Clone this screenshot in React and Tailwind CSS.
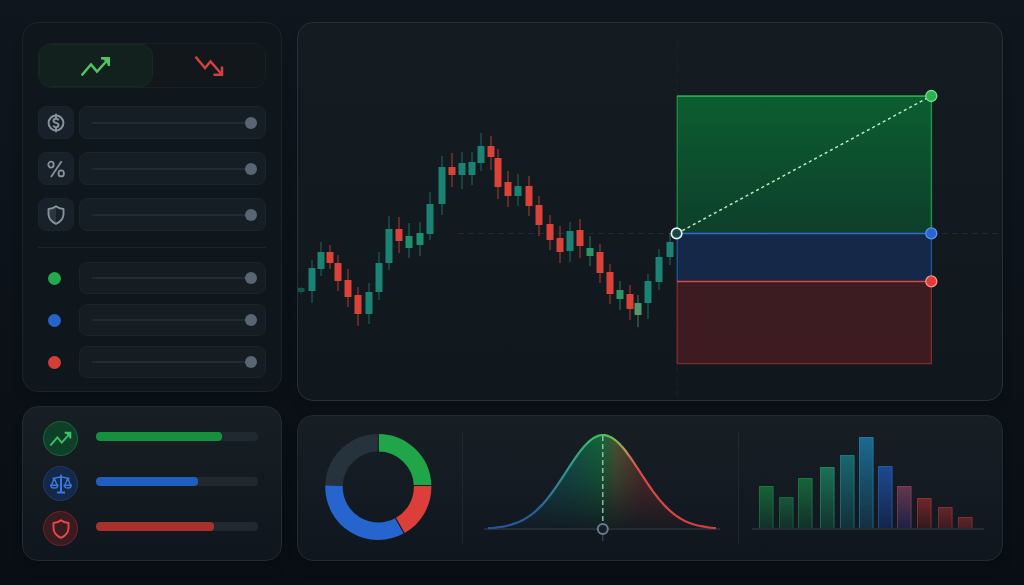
import React, { useState } from 'react';

// x, body top, body bottom, wick top, wick bottom, colour
const CANDLES = [
  [3, 265, 269, 264, 271, '#14564d'],
  [14, 245, 268, 237, 280, '#1b8373'],
  [23, 229, 246, 219, 253, '#1b8373'],
  [32, 229, 240, 222, 246, '#dc4338'],
  [40, 240, 258, 232, 268, '#dc4338'],
  [50, 257, 274, 246, 284, '#dc4338'],
  [60, 272, 291, 264, 303, '#dc4338'],
  [71, 269, 291, 260, 301, '#1b8373'],
  [81, 240, 269, 229, 277, '#1b8373'],
  [91, 206, 240, 193, 247, '#1b8373'],
  [101, 206, 218, 194, 230, '#dc4338'],
  [111, 213, 225, 200, 235, '#1f8f70'],
  [122, 210, 222, 199, 233, '#1f8f70'],
  [132, 181, 211, 169, 217, '#1b8373'],
  [144, 144, 181, 133, 192, '#1b8373'],
  [154, 144, 152, 130, 164, '#dc4338'],
  [164, 140, 152, 129, 166, '#1b8373'],
  [174, 139, 152, 129, 162, '#1b8373'],
  [183, 123, 140, 110, 148, '#1b8373'],
  [193, 123, 134, 113, 147, '#dc4338'],
  [200, 135, 164, 126, 176, '#dc4338'],
  [210, 159, 173, 148, 184, '#dc4338'],
  [220, 163, 173, 151, 183, '#1b8373'],
  [231, 163, 183, 153, 193, '#dc4338'],
  [241, 182, 202, 173, 213, '#dc4338'],
  [252, 201, 217, 192, 227, '#dc4338'],
  [262, 215, 229, 203, 240, '#dc4338'],
  [272, 208, 228, 199, 239, '#1b8373'],
  [282, 207, 223, 196, 235, '#dc4338'],
  [292, 225, 233, 213, 243, '#2c9566'],
  [302, 229, 250, 221, 260, '#dc4338'],
  [312, 249, 271, 241, 281, '#dc4338'],
  [322, 267, 276, 258, 287, '#2c9566'],
  [332, 271, 286, 262, 297, '#dc4338'],
  [340, 280, 292, 272, 304, '#57966b'],
  [350, 258, 280, 251, 296, '#1b8373'],
  [361, 234, 259, 226, 267, '#1b8373'],
  [372, 219, 234, 210, 242, '#1b8373'],
];

// x, top, fill top, fill bottom, edge
const BARS = [
  [20, 54, '#176437', '#12302a', '#1f7f43'],
  [40, 65, '#185838', '#12302a', '#1f6a43'],
  [59, 46, '#176539', '#12302a', '#1f8046'],
  [81, 35, '#1b7158', '#12332f', '#24896a'],
  [101, 23, '#1b6770', '#123039', '#257f84'],
  [120, 5, '#1d6a90', '#13303f', '#2380ab'],
  [139, 34, '#1e4a8f', '#14254a', '#285fb8'],
  [158, 54, '#66364f', '#1b2244', '#8d3f5a'],
  [178, 66, '#6e272b', '#33191e', '#a63736'],
  [199, 75, '#64262a', '#3b1b20', '#9a3535'],
  [219, 85, '#5e2529', '#461d22', '#9a3535'],
];

const bellPoints = Array.from({ length: 77 }, (_, i) => {
  const x = 25 + i * 3;
  const y = 97 - 94 * Math.exp(-((x - 140) ** 2) / (2 * 37 ** 2));
  return `${x},${y.toFixed(1)}`;
});
const bellPath = `M${bellPoints.join(' L')}`;

const TrendUpIcon = ({ className }) => (
  <svg viewBox="0 0 30 20" className={className} fill="none" stroke="currentColor" strokeWidth="2.5">
    <path d="M0.5 19.5 10 8.5 16 15.5 27 3.5" />
    <path d="M20 2.2H27.8V10" />
    <path d="M21 2H28V9.5Z" fill="currentColor" stroke="none" />
  </svg>
);

const TrendDownIcon = ({ className }) => (
  <svg viewBox="0 0 30 20" className={className} fill="none" stroke="currentColor" strokeWidth="2.5">
    <path d="M1.5 .7 11 12 16.5 5.5 27.5 18" />
    <path d="M28 10.5V18.7H19.5" />
  </svg>
);

const DollarIcon = () => (
  <svg viewBox="0 0 20 20" className="w-5 h-5" fill="none" stroke="currentColor" strokeWidth="2">
    <circle cx="10" cy="10" r="7.4" />
    <path d="M10 .8V5.6M10 14.4V19.2" />
    <path d="M12.6 7.4C12.2 6.3 11.2 5.8 10 5.8 8.5 5.8 7.5 6.6 7.5 7.8 7.5 10.6 12.6 9.2 12.6 12.1 12.6 13.4 11.5 14.2 10 14.2 8.6 14.2 7.6 13.6 7.3 12.5" />
  </svg>
);

const PercentIcon = () => (
  <svg viewBox="0 0 20 20" className="w-5 h-5" fill="none" stroke="currentColor" strokeWidth="1.8">
    <path d="M15.6 2.2 5 18" />
    <ellipse cx="5" cy="5.6" rx="2.7" ry="3" />
    <ellipse cx="15.2" cy="14.4" rx="2.7" ry="3" />
  </svg>
);

const ShieldIcon = ({ className, shaded }) => (
  <svg viewBox="0 0 20 20" className={className} fill="none" stroke="currentColor" strokeWidth="1.9" strokeLinejoin="round">
    {shaded && <path d="M10 1.5V18.5C5.5 16.5 2.5 13.3 2.5 9V4.2C5.6 4 8 3.2 10 1.5Z" fill="#2c363f" stroke="none" />}
    <path d="M10 1.3C12 3 14.4 3.9 17.5 4V9C17.5 13.4 14.5 16.8 10 18.8 5.5 16.8 2.5 13.4 2.5 9V4C5.6 3.9 8 3 10 1.3Z" />
  </svg>
);

const ScaleIcon = ({ className }) => (
  <svg viewBox="0 0 22 20" className={className} fill="none" stroke="currentColor">
    <path d="M11 .8V18.5" strokeWidth="2" />
    <path d="M7 18.5H15" strokeWidth="2" />
    <path d="M2.5 4.3C5 4.6 7.5 3 11 3S17 4.6 19.5 4.3" strokeWidth="1.7" />
    <path d="M4.3 4.5 1.3 11.5M4.3 4.5 7.3 11.5M17.7 4.5 14.7 11.5M17.7 4.5 20.7 11.5" strokeWidth="1.4" />
    <path d="M.8 11.3H7.8C7.8 15 .8 15 .8 11.3ZM14.2 11.3H21.2C21.2 15 14.2 15 14.2 11.3Z" strokeWidth="1.5" />
  </svg>
);

const Slider = ({ id, label }) => {
  const [value, setValue] = useState(100);
  return (
    <input
      id={id}
      type="range"
      aria-label={label}
      value={value}
      onChange={(e) => setValue(Number(e.target.value))}
      className="w-full h-3 appearance-none bg-transparent cursor-pointer
        [&::-webkit-slider-runnable-track]:h-[2px] [&::-webkit-slider-runnable-track]:rounded-full [&::-webkit-slider-runnable-track]:bg-[#212b32]
        [&::-webkit-slider-thumb]:appearance-none [&::-webkit-slider-thumb]:w-3 [&::-webkit-slider-thumb]:h-3 [&::-webkit-slider-thumb]:-mt-[5px]
        [&::-webkit-slider-thumb]:rounded-full [&::-webkit-slider-thumb]:bg-[#596572]"
    />
  );
};

const SETTINGS = [
  { id: 'amount', label: 'Amount', icon: <DollarIcon /> },
  { id: 'percent', label: 'Risk percent', icon: <PercentIcon /> },
  { id: 'protection', label: 'Protection', icon: <ShieldIcon className="w-5 h-5" shaded /> },
];

const LEVELS = [
  { id: 'target', label: 'Target', dot: 'bg-[#22a94b]' },
  { id: 'entry', label: 'Entry', dot: 'bg-[#2664cb]' },
  { id: 'stop', label: 'Stop', dot: 'bg-[#d63d37]' },
];

const METERS = [
  {
    label: 'Profit',
    value: 78,
    bar: 'bg-[#16903f]',
    badge: 'bg-[#0e3f29] border-[#18693a] text-[#3cc463]',
    icon: <TrendUpIcon className="w-[22px] h-[15px]" />,
  },
  {
    label: 'Balance',
    value: 63,
    bar: 'bg-[#205fc0]',
    badge: 'bg-[#142949] border-[#1d3a6c] text-[#3b78dc]',
    icon: <ScaleIcon className="w-[22px] h-5" />,
  },
  {
    label: 'Risk',
    value: 73,
    bar: 'bg-[#a8302d]',
    badge: 'bg-[#3b1b20] border-[#6b2529] text-[#e64c46]',
    icon: <ShieldIcon className="w-5 h-5" />,
  },
];

const OrderPanel = () => {
  const [side, setSide] = useState('long');

  return (
    <section className="rounded-2xl border border-[#1c2429] bg-[#0f161c] px-[15px] pt-5 pb-[13px] shadow-lg">
      <div className="flex h-[45px] rounded-xl border border-[#192125] bg-[#11171b] overflow-hidden mb-[18px]">
        <button
          aria-label="Long"
          onClick={() => setSide('long')}
          className={`flex-1 flex items-center justify-center rounded-xl text-[#4fc167] ${side === 'long' ? 'bg-[#12201e] border border-[#142b22]' : ''}`}
        >
          <TrendUpIcon className="w-[30px] h-5" />
        </button>
        <button
          aria-label="Short"
          onClick={() => setSide('short')}
          className={`flex-1 flex items-center justify-center rounded-xl text-[#cf423f] ${side === 'short' ? 'bg-[#241619] border border-[#351a1d]' : ''}`}
        >
          <TrendDownIcon className="w-[30px] h-5" />
        </button>
      </div>

      <div className="flex flex-col gap-[13px]">
        {SETTINGS.map(({ id, label, icon }) => (
          <div key={id} className="flex gap-[5px] h-[33px]">
            <label htmlFor={id} className="w-9 flex items-center justify-center rounded-lg border border-[#1a242b] bg-[#182129] text-[#87929c]">
              {icon}
            </label>
            <div className="flex-1 flex items-center rounded-lg border border-[#1b252b] bg-[#151e25] pl-3 pr-2">
              <Slider id={id} label={label} />
            </div>
          </div>
        ))}
      </div>

      <hr className="border-[#1c2428] mt-4 mb-[14px]" />

      <div className="flex flex-col gap-[10px]">
        {LEVELS.map(({ id, label, dot }) => (
          <div key={id} className="flex items-center gap-[5px] h-8">
            <label htmlFor={id} className="w-9 flex pl-[10px]">
              <span className={`w-[13px] h-[13px] rounded-full ${dot}`} />
            </label>
            <div className="flex-1 h-full flex items-center rounded-lg border border-[#1a2429] bg-[#151d23] pl-3 pr-2">
              <Slider id={id} label={label} />
            </div>
          </div>
        ))}
      </div>
    </section>
  );
};

const MeterPanel = () => (
  <section className="flex flex-col gap-[10px] rounded-2xl border border-[#222a2f] bg-linear-to-b from-[#171f24] to-[#0f161d] pl-5 pr-[23px] py-[14px] shadow-lg">
    {METERS.map(({ label, value, bar, badge, icon }) => (
      <div key={label} className="flex items-center gap-[18px]">
        <div className={`w-[35px] h-[35px] shrink-0 flex items-center justify-center rounded-full border ${badge}`}>{icon}</div>
        <div
          role="progressbar"
          aria-label={label}
          aria-valuenow={value}
          className="flex-1 h-[9px] mb-1 rounded-[4px] bg-[#20292f] overflow-hidden"
        >
          <div className={`h-full rounded-[4px] ${bar}`} style={{ width: `${value}%` }} />
        </div>
      </div>
    ))}
  </section>
);

const PriceChart = () => (
  <section className="rounded-2xl border border-[#263035] bg-linear-to-b from-[#141b21] to-[#10171d] overflow-hidden shadow-lg">
    <svg viewBox="0 0 704 377" className="block w-full">
      <defs>
        <linearGradient id="profitZone" x1="0" y1="0" x2="0" y2="1">
          <stop offset="0" stopColor="#0c5e30" />
          <stop offset="1" stopColor="#0d3f2b" />
        </linearGradient>
      </defs>

      <path d="M379 18V73M379 342V376" stroke="#1b2329" strokeDasharray="8 4" />
      <path d="M160 210.5H379M634 210.5H703" stroke="#222b31" strokeDasharray="6 4" />

      {CANDLES.map(([x, top, bottom, high, low, color]) => (
        <g key={x} fill={color}>
          <rect x={x - 0.5} y={high} width="1" height={low - high} opacity="0.8" />
          <rect x={x - 3.5} y={top} width="7" height={bottom - top} rx="0.5" />
        </g>
      ))}

      <rect x="379" y="73" width="254.5" height="137" fill="url(#profitZone)" />
      <rect x="379" y="210" width="254.5" height="48" fill="#162848" />
      <rect x="379" y="258" width="254.5" height="83" fill="#3d1c21" />
      <path d="M379.2 341V258M633.4 258V341M379 340.7H634" stroke="#852a2c" strokeWidth="1.3" />
      <path d="M379.2 73V210" stroke="#1c8c42" strokeWidth="1.3" />
      <path d="M633.4 73V210" stroke="#1e9145" strokeWidth="1.5" />
      <path d="M379 73.2H634" stroke="#2ba650" strokeWidth="1.7" />
      <path d="M379.2 210V258M633.4 210V258" stroke="#2055a3" strokeWidth="1.3" />
      <path d="M379 210.5H634" stroke="#2b6fd0" strokeWidth="1.5" />
      <path d="M379 258.4H634" stroke="#d3494a" strokeWidth="1.5" />
      <path d="M379 210.5 633 73" stroke="#b9eac5" strokeWidth="1.5" strokeDasharray="3 3" />

      <circle cx="633.3" cy="73" r="5.5" fill="#27b34f" stroke="#7fdc97" strokeWidth="1.3" />
      <circle cx="633.3" cy="210.4" r="5.5" fill="#2666d0" stroke="#5b93e8" strokeWidth="1.3" />
      <circle cx="633.3" cy="258.4" r="5.5" fill="#e23c3a" stroke="#f3918c" strokeWidth="1.3" />
      <circle cx="378.6" cy="210.4" r="5.2" fill="#16493f" stroke="#e3efec" strokeWidth="1.7" />
    </svg>
  </section>
);

const DonutChart = () => (
  <svg viewBox="0 0 164 112" className="block w-full" fill="none" strokeWidth="17.5">
    <path d="M80.3 10.7A44.3 44.3 0 0 1 124.6 53.5" stroke="#20a548" />
    <path d="M124.6 53.5A44.3 44.3 0 0 1 101.8 93.7" stroke="#dc3f39" />
    <path d="M101.8 93.7A44.3 44.3 0 0 1 36 53.5" stroke="#2565cd" />
    <path d="M36 53.5A44.3 44.3 0 0 1 80.3 10.7" stroke="#26323c" />
    <path d="M80.3 1V20M115 53.5H134M97.3 85.5 106.5 102" stroke="#151c22" strokeWidth="1.2" />
  </svg>
);

const BellCurve = () => (
  <svg viewBox="0 0 275 112" className="block w-full" fill="none">
    <defs>
      <linearGradient id="bellLine" gradientUnits="userSpaceOnUse" x1="25" y1="0" x2="253" y2="0">
        <stop offset="0" stopColor="#25509c" />
        <stop offset="0.22" stopColor="#27629f" />
        <stop offset="0.36" stopColor="#2f9c8e" />
        <stop offset="0.48" stopColor="#3fbf5e" />
        <stop offset="0.54" stopColor="#5dc05c" />
        <stop offset="0.6" stopColor="#b69a50" />
        <stop offset="0.66" stopColor="#df4a48" />
        <stop offset="1" stopColor="#cf3c3c" />
      </linearGradient>
      <linearGradient id="bellFill" gradientUnits="userSpaceOnUse" x1="25" y1="0" x2="253" y2="0">
        <stop offset="0" stopColor="#1c4a80" />
        <stop offset="0.35" stopColor="#12756e" />
        <stop offset="0.5" stopColor="#15994a" />
        <stop offset="0.56" stopColor="#6f7a3c" />
        <stop offset="0.68" stopColor="#8c3432" />
        <stop offset="1" stopColor="#8c2f32" />
      </linearGradient>
      <linearGradient id="bellFade" x1="0" y1="0" x2="0" y2="1">
        <stop offset="0" stopColor="#fff" stopOpacity="0.6" />
        <stop offset="0.5" stopColor="#fff" stopOpacity="0.38" />
        <stop offset="1" stopColor="#fff" stopOpacity="0.05" />
      </linearGradient>
      <mask id="bellMask">
        <rect width="275" height="97" fill="url(#bellFade)" />
      </mask>
    </defs>
    <path d={`${bellPath} Z`} fill="url(#bellFill)" mask="url(#bellMask)" />
    <path d="M21 97H257" stroke="#2b3438" strokeWidth="1.5" />
    <path d={bellPath} stroke="url(#bellLine)" strokeWidth="2.2" strokeLinejoin="round" />
    <path d="M139.8 4V92" stroke="#a9c7b3" strokeWidth="1.3" strokeDasharray="5 3" />
    <path d="M139.8 103V109" stroke="#46525d" />
    <circle cx="139.8" cy="97" r="5" fill="#161e27" stroke="#6b7b90" strokeWidth="2" />
  </svg>
);

const Histogram = () => (
  <svg viewBox="0 0 263 112" className="block w-full">
    <defs>
      {BARS.map(([x, , from, to]) => (
        <linearGradient key={x} id={`bar${x}`} x1="0" y1="0" x2="0" y2="1">
          <stop offset="0" stopColor={from} />
          <stop offset="1" stopColor={to} />
        </linearGradient>
      ))}
    </defs>
    {BARS.map(([x, top, , , edge]) => (
      <g key={x}>
        <rect x={x} y={top} width="14.5" height={96 - top} fill={`url(#bar${x})`} />
        <path d={`M${x + 0.5} 96V${top + 0.5}H${x + 14}V96`} fill="none" stroke={edge} strokeOpacity="0.6" />
      </g>
    ))}
    <path d="M13 97H245" stroke="#2b353b" strokeWidth="1.7" />
  </svg>
);

const App = () => (
  <main className="min-h-screen flex items-start gap-[15px] bg-linear-to-b from-[#0f161d] to-[#090e14] pl-[22px] pr-[21px] pt-[22px] pb-6">
    <aside className="w-[260px] shrink-0 flex flex-col gap-[14px]">
      <OrderPanel />
      <MeterPanel />
    </aside>
    <div className="flex-1 min-w-0 flex flex-col gap-[14px]">
      <PriceChart />
      <section className="grid grid-cols-[165fr_276fr_263fr] rounded-2xl border border-[#222a30] bg-linear-to-b from-[#171f25] to-[#10161e] py-4 shadow-lg">
        <div className="border-r border-[#20282e]">
          <DonutChart />
        </div>
        <div className="border-r border-[#20282e]">
          <BellCurve />
        </div>
        <Histogram />
      </section>
    </div>
  </main>
);

export default App;
